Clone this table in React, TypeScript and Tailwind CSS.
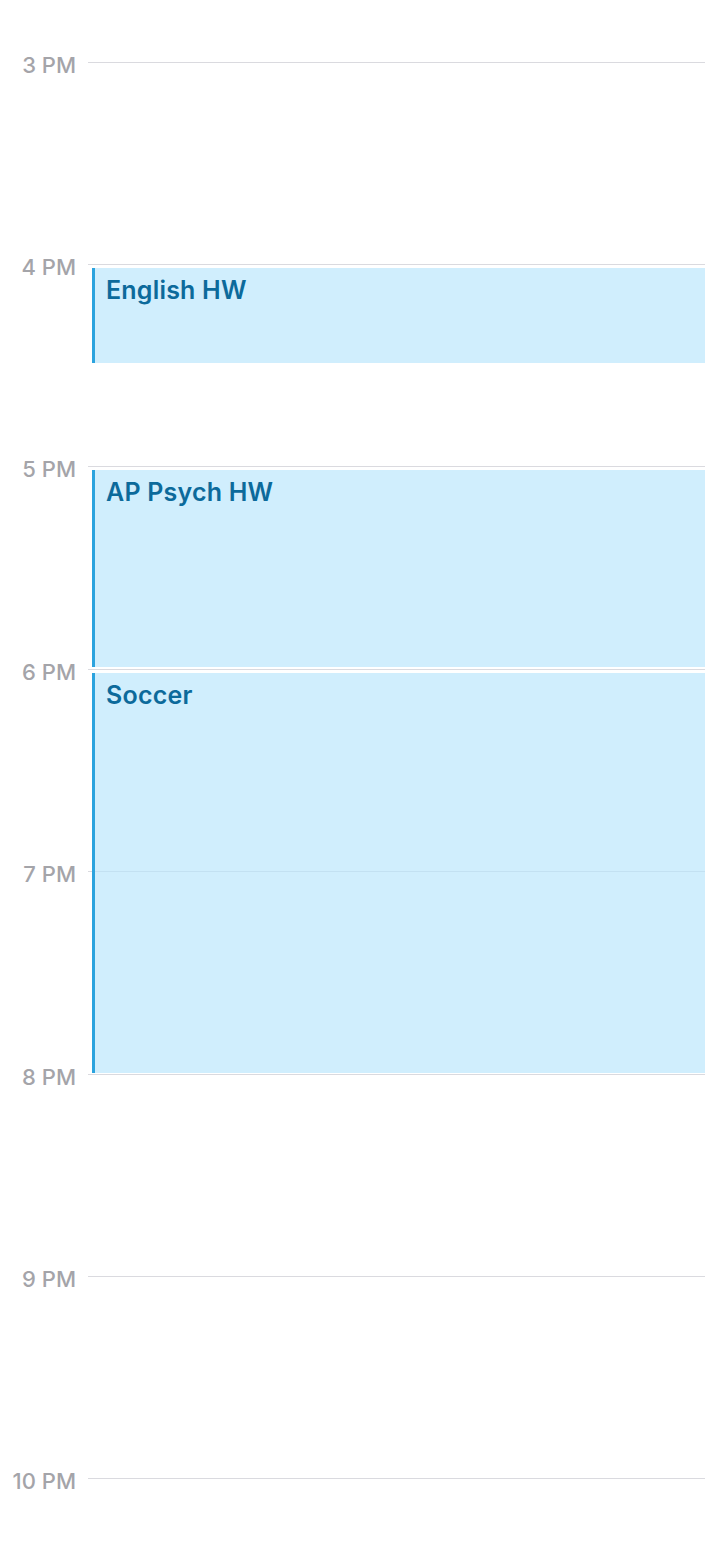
import React from "react";

const hours = ["3 PM", "4 PM", "5 PM", "6 PM", "7 PM", "8 PM", "9 PM", "10 PM"];

const events = [
  { title: "English HW", top: 268, height: 95 },
  { title: "AP Psych HW", top: 470, height: 196.5 },
  { title: "Soccer", top: 672.5, height: 400 },
];

export default function App() {
  return (
    <div
      className="relative w-[705px] h-[1557px] bg-white overflow-hidden"
      style={{ fontFamily: "Inter, 'Liberation Sans', sans-serif" }}
    >
      <div className="pt-[50px] flex flex-col">
        {hours.map((h) => (
          <div key={h} className="h-[202.43px] shrink-0">
            <div className="flex items-center h-6">
              <div className="w-[76px] text-right text-[22px] font-medium text-[#a4a4a9] leading-none pt-[5px]">
                {h}
              </div>
              <div className="ml-3 flex-1 h-px bg-[#dadadf]" />
            </div>
          </div>
        ))}
      </div>
      {events.map((e) => (
        <div
          key={e.title}
          className="absolute left-[92px] right-0 flex bg-[rgba(182,229,252,0.64)]"
          style={{ top: e.top, height: e.height }}
        >
          <div className="w-[3px] bg-[#2ba3de]" />
          <div className="pl-[11px] pt-[7px] text-[25px] font-semibold text-[#0c6a9b] leading-tight tracking-[0.2px]">
            {e.title}
          </div>
        </div>
      ))}
    </div>
  );
}
